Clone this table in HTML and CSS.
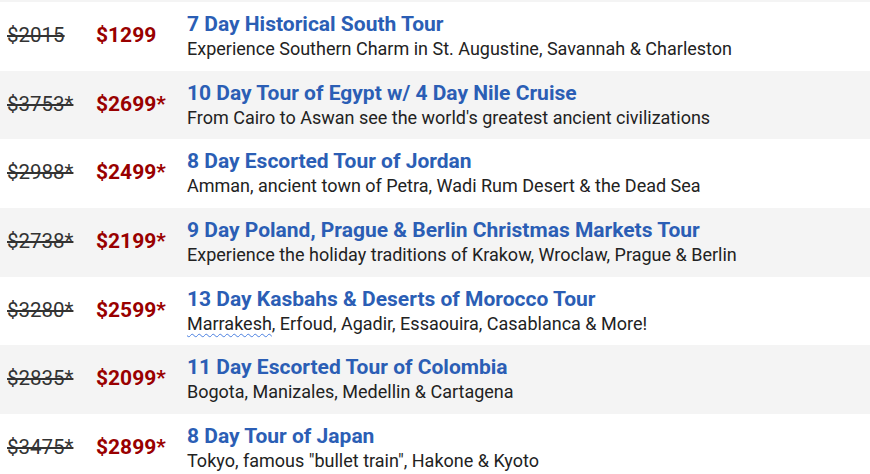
FILE: index.html
```html
<!DOCTYPE html>
<html lang="en">
<head>
<meta charset="utf-8">
<title>Tours</title>
<link rel="stylesheet" href="styles.css">
</head>
<body>
<div class="list">
  <div class="row">
    <div class="old">$2015</div>
    <div class="new">$1299</div>
    <div class="info">
      <a class="title" href="#">7 Day Historical South Tour</a>
      <div class="desc">Experience Southern Charm in St. Augustine, Savannah &amp; Charleston</div>
    </div>
  </div>
  <div class="row">
    <div class="old">$3753*</div>
    <div class="new">$2699*</div>
    <div class="info">
      <a class="title" href="#">10 Day Tour of Egypt w/ 4 Day Nile Cruise</a>
      <div class="desc">From Cairo to Aswan see the world's greatest ancient civilizations</div>
    </div>
  </div>
  <div class="row">
    <div class="old">$2988*</div>
    <div class="new">$2499*</div>
    <div class="info">
      <a class="title" href="#">8 Day Escorted Tour of Jordan</a>
      <div class="desc">Amman, ancient town of Petra, Wadi Rum Desert &amp; the Dead Sea</div>
    </div>
  </div>
  <div class="row">
    <div class="old">$2738*</div>
    <div class="new">$2199*</div>
    <div class="info">
      <a class="title" href="#">9 Day Poland, Prague &amp; Berlin Christmas Markets Tour</a>
      <div class="desc">Experience the holiday traditions of Krakow, Wroclaw, Prague &amp; Berlin</div>
    </div>
  </div>
  <div class="row">
    <div class="old">$3280*</div>
    <div class="new">$2599*</div>
    <div class="info">
      <a class="title" href="#">13 Day Kasbahs &amp; Deserts of Morocco Tour</a>
      <div class="desc"><span class="spell">Marrakesh</span>, Erfoud, Agadir, Essaouira, Casablanca &amp; More!</div>
    </div>
  </div>
  <div class="row">
    <div class="old">$2835*</div>
    <div class="new">$2099*</div>
    <div class="info">
      <a class="title" href="#">11 Day Escorted Tour of Colombia</a>
      <div class="desc">Bogota, Manizales, Medellin &amp; Cartagena</div>
    </div>
  </div>
  <div class="row">
    <div class="old">$3475*</div>
    <div class="new">$2899*</div>
    <div class="info">
      <a class="title" href="#">8 Day Tour of Japan</a>
      <div class="desc">Tokyo, famous "bullet train", Hakone &amp; Kyoto</div>
    </div>
  </div>
</div>
</body>
</html>
```
FILE: styles.css
```css
html, body {
  margin: 0;
  padding: 0;
  background: #ffffff;
  font-family: Roboto, "Liberation Sans", sans-serif;
  color: #222222;
  overflow: hidden;
}

.list {
  border-top: 2px solid #f4f4f4;
}

.row {
  display: grid;
  grid-template-columns: 89px 91px 1fr;
  align-items: center;
  height: 68.7px;
  padding-left: 7px;
  box-sizing: border-box;
}

.row:nth-child(even) {
  background: #f4f4f4;
}

.old,
.new {
  line-height: 24px;
  margin-bottom: 3px;
}

.old {
  font-size: 20.5px;
  color: #333333;
  text-decoration: line-through;
}

.new {
  font-size: 21px;
  font-weight: 700;
  color: #990000;
}

.info {
  display: flex;
  flex-direction: column;
  align-self: start;
  padding-top: 9px;
}

.title {
  font-size: 21px;
  font-weight: 700;
  line-height: 26px;
  color: #2b5eb5;
  text-decoration: none;
}

.desc {
  font-size: 18px;
  line-height: 23px;
  color: #222222;
}

.spell {
  text-decoration: underline wavy #4a7fe0;
  text-decoration-thickness: 1px;
  text-underline-offset: 3px;
}
```
